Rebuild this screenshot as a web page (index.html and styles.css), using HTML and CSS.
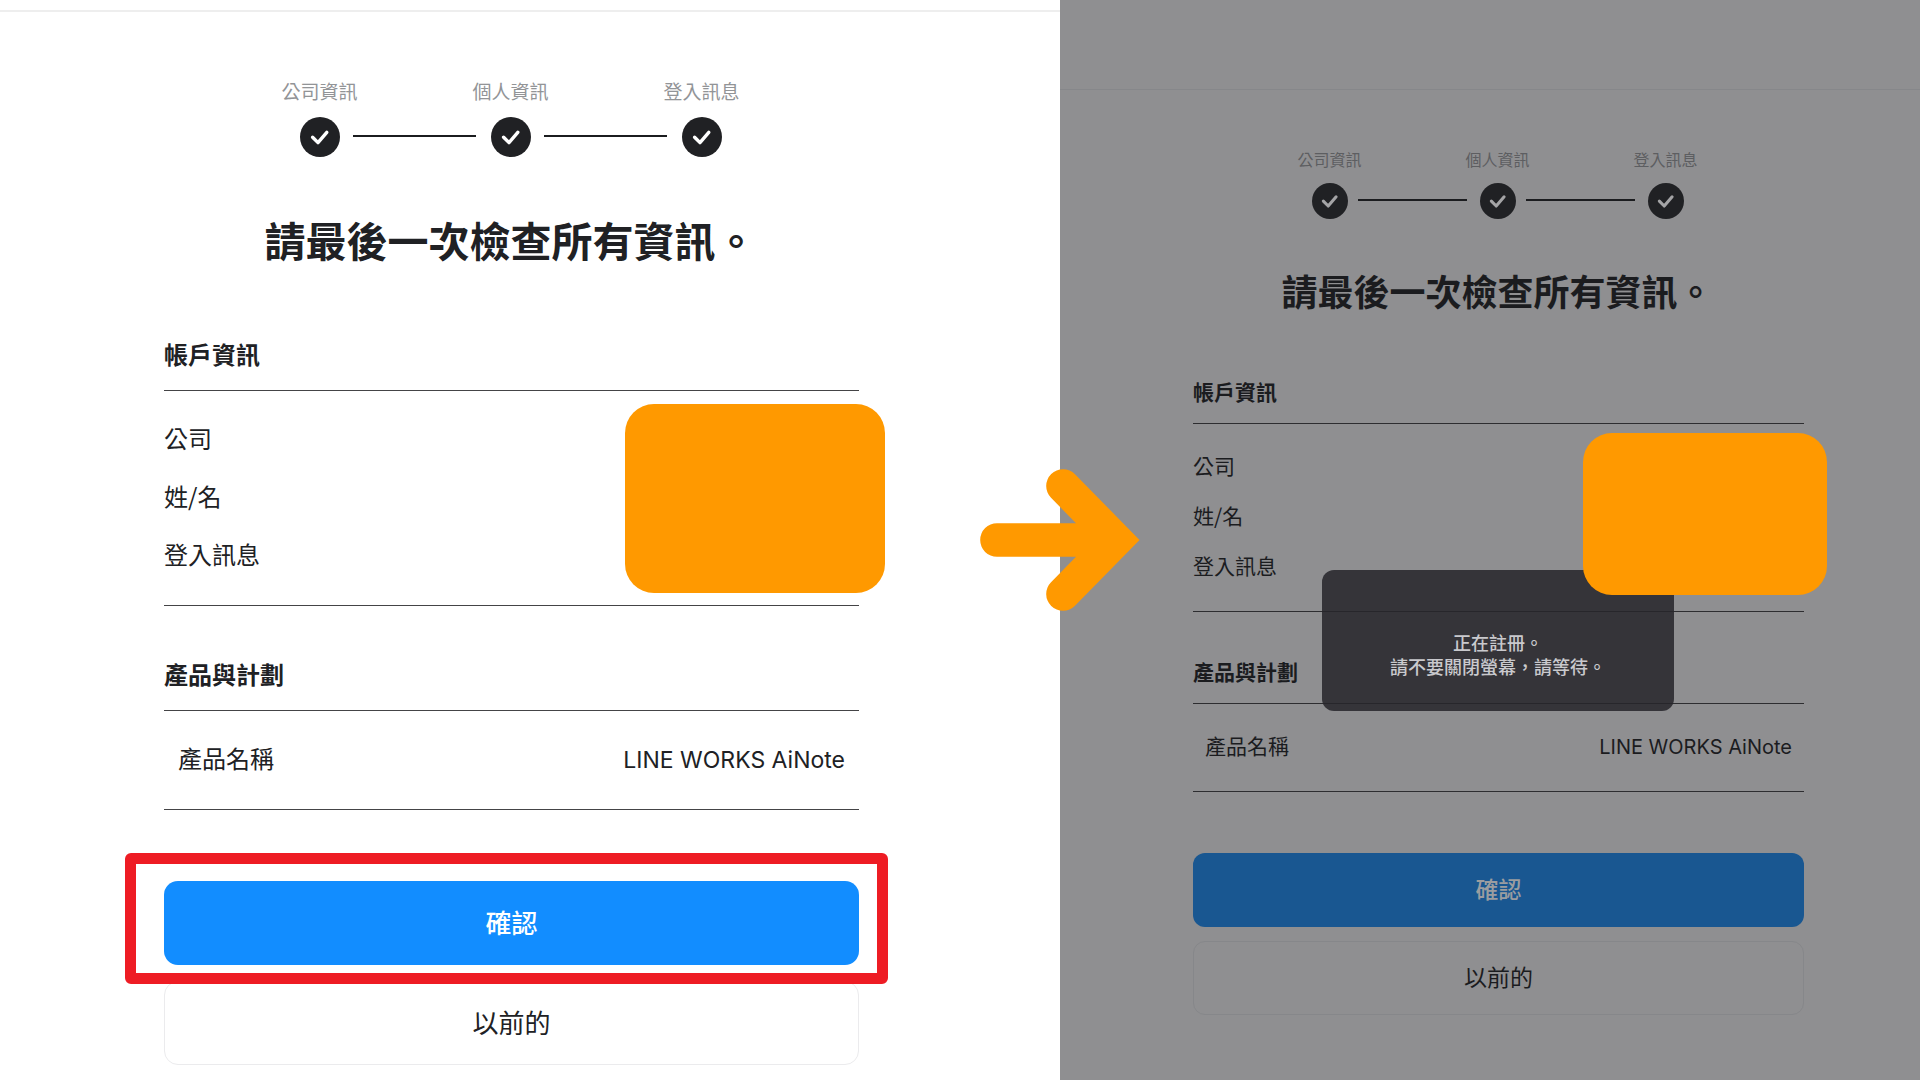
FILE: index.html
```html
<!DOCTYPE html>
<html lang="zh-Hant">
<head>
    <meta charset="UTF-8">
    <meta name="viewport" content="width=device-width, initial-scale=1.0">
    <title>LINE WORKS AiNote</title>
    <link rel="stylesheet" href="styles.css">
</head>
<body>

    <svg class="symbols" aria-hidden="true">
        <symbol id="check" viewBox="0 0 40 40">
            <circle cx="20" cy="20" r="20" fill="currentColor"/>
            <path d="M12.6 20.2 L18 25.6 L26.8 15.4" fill="none" stroke="var(--tick)" stroke-width="3.4" stroke-linecap="round" stroke-linejoin="round"/>
        </symbol>
    </svg>

    <section class="panel review">
        <header class="topbar"></header>
        <main class="content">
            <ol class="steps">
                <li class="step"><span>公司資訊</span><svg><use href="#check"/></svg></li>
                <li class="line"></li>
                <li class="step"><span>個人資訊</span><svg><use href="#check"/></svg></li>
                <li class="line"></li>
                <li class="step"><span>登入訊息</span><svg><use href="#check"/></svg></li>
            </ol>

            <h1>請最後一次檢查所有資訊。</h1>

            <h2>帳戶資訊</h2>
            <dl class="info">
                <div><dt>公司</dt></div>
                <div><dt>姓/名</dt></div>
                <div><dt>登入訊息</dt></div>
                <div class="mask"></div>
            </dl>

            <h2>產品與計劃</h2>
            <dl class="info product">
                <div><dt>產品名稱</dt><dd>LINE WORKS AiNote</dd></div>
            </dl>

            <div class="actions">
                <div class="highlight"><button type="button" class="confirm">確認</button></div>
                <button type="button" class="back">以前的</button>
            </div>
        </main>

        <svg class="arrow" viewBox="0 0 162 144" aria-hidden="true">
            <path d="M18 72 H130 M84 18 L137 72 L84 126" fill="none" stroke="#ff9900" stroke-width="33.6" stroke-linecap="round"/>
        </svg>
    </section>

    <section class="panel waiting">
        <header class="topbar"></header>
        <main class="content">
            <ol class="steps">
                <li class="step"><span>公司資訊</span><svg><use href="#check"/></svg></li>
                <li class="line"></li>
                <li class="step"><span>個人資訊</span><svg><use href="#check"/></svg></li>
                <li class="line"></li>
                <li class="step"><span>登入訊息</span><svg><use href="#check"/></svg></li>
            </ol>

            <h1>請最後一次檢查所有資訊。</h1>

            <h2>帳戶資訊</h2>
            <dl class="info">
                <div><dt>公司</dt></div>
                <div><dt>姓/名</dt></div>
                <div><dt>登入訊息</dt></div>
                <div class="mask"></div>
            </dl>

            <h2>產品與計劃</h2>
            <dl class="info product">
                <div><dt>產品名稱</dt><dd>LINE WORKS AiNote</dd></div>
            </dl>

            <div class="actions">
                <button type="button" class="confirm">確認</button>
                <button type="button" class="back">以前的</button>
            </div>

            <div class="toast" role="status">正在註冊。<br>請不要關閉螢幕，請等待。</div>
        </main>
    </section>

</body>
</html>
```

FILE: styles.css
```css
* { box-sizing: border-box; }
body { margin: 0; min-height: 100vh; display: grid; grid-template-columns: 53fr 43fr; overflow: hidden; font-family: "Noto Sans CJK TC", "Noto Sans", sans-serif; }
h1, h2, ol, dl, dt, dd { margin: 0; padding: 0; }
.symbols { position: absolute; width: 0; height: 0; }

/* Sizes and colours of each panel */
.review {
    --bg: #ffffff; --text: #202124; --muted: #929497; --rule: #444446; --edge: #ebebed; --tick: #ffffff;
    --primary: #128dff; --on-primary: #ffffff;
    --label: 19px; --label-line: 24px; --dot: 40px; --dot-gap: 14px;
    --title: 41px; --title-line: 60px; --title-gap: 52px;
    --body: 24px; --latin: 23px; --head-line: 36px; --head-pad: 18px; --first-gap: 67px; --next-gap: 50px;
    --row: 58px; --row-top: 18px; --row-bottom: 22px; --inset: 14px;
    --button: 26px; --button-height: 84px; --button-gap: 16px; --actions-gap: 71px; --radius: 14px;
}
.waiting {
    --bg: #8f8f91; --text: #1b1c1f; --muted: #5d5e61; --rule: #2d2d30; --edge: #86878a; --tick: #a4a4a6;
    --primary: #195791; --on-primary: #9b9da0;
    --label: 16px; --label-line: 22px; --dot: 36px; --dot-gap: 13px;
    --title: 36px; --title-line: 52px; --title-gap: 45px;
    --body: 21px; --latin: 20px; --head-line: 32px; --head-pad: 16px; --first-gap: 59px; --next-gap: 43px;
    --row: 50px; --row-top: 16px; --row-bottom: 21px; --inset: 12px;
    --button: 23px; --button-height: 74px; --button-gap: 14px; --actions-gap: 61px; --radius: 12px;
}

.panel { position: relative; background-color: var(--bg); color: var(--text); }
.topbar { border-bottom: 2px solid var(--edge); }
.review .topbar { height: 12px; border-color: #eeeeee; }
.waiting .topbar { height: 90px; border-bottom-width: 1px; }
.content { position: relative; }
.review .content { padding: 67px 201px 0 164px; }
.waiting .content { padding: 58px 116px 0 133px; }

.steps { list-style: none; display: flex; justify-content: center; align-items: flex-end; }
.step { width: var(--dot); display: flex; flex-direction: column; align-items: center; gap: var(--dot-gap); }
.step span { font-size: var(--label); line-height: var(--label-line); color: var(--muted); white-space: nowrap; }
.step svg { display: block; width: var(--dot); height: var(--dot); color: #202124; }
.line { width: 123px; height: 2px; margin: 0 15px 20px 13px; background-color: #1b1c1f; }
.waiting .line { width: 109px; margin: 0 13px 18px 10px; }
.steps, h1 { padding-right: 2px; }

h1 { margin-top: var(--title-gap); font-size: var(--title); line-height: var(--title-line); font-weight: bold; text-align: center; white-space: nowrap; }
h2 { margin-top: var(--first-gap); padding-bottom: var(--head-pad); border-bottom: 1px solid var(--rule); font-size: var(--body); line-height: var(--head-line); font-weight: bold; }
.info { position: relative; padding: var(--row-top) 0 var(--row-bottom); border-bottom: 1px solid var(--rule); font-size: var(--body); line-height: var(--row); }
.info + h2 { margin-top: var(--next-gap); }
.info > div { height: var(--row); display: flex; justify-content: space-between; align-items: baseline; }
.product { padding-left: var(--inset); padding-right: var(--inset); }
.info dd { font-family: Inter, sans-serif; font-size: var(--latin); }

/* Orange cover over the account values */
.info > .mask { position: absolute; z-index: 2; top: 13px; right: -26px; width: 260px; height: 189px; border-radius: 29px; background-color: #ff9900; }
.waiting .info > .mask { top: 9px; right: -23px; width: 244px; height: 162px; }

.actions { margin-top: var(--actions-gap); display: flex; flex-direction: column; gap: var(--button-gap); }
.actions button { width: 100%; height: var(--button-height); padding: 0 0 4px; border: none; border-radius: var(--radius); font-family: inherit; font-size: var(--button); font-weight: 500; color: var(--text); background-color: transparent; cursor: pointer; }
.actions .confirm { display: block; background-color: var(--primary); color: var(--on-primary); }
.actions .back { border: 1px solid var(--edge); font-weight: 400; }
.highlight { position: relative; }
.highlight::after { content: ""; position: absolute; top: -28px; right: -29px; bottom: -19px; left: -39px; border: 11px solid #ee1c24; border-radius: 6px; pointer-events: none; }

.toast { position: absolute; z-index: 1; top: 480px; left: 262px; right: 246px; padding: 60px 20px 30px; min-height: 141px; border-radius: 12px; background-color: rgba(39, 37, 43, 0.86); color: #c9c9cd; font-size: 18px; font-weight: 500; line-height: 24px; text-align: center; white-space: nowrap; }
.arrow { position: absolute; z-index: 3; top: 50%; right: -81px; width: 162px; height: 144px; transform: translateY(-50%); }
```
